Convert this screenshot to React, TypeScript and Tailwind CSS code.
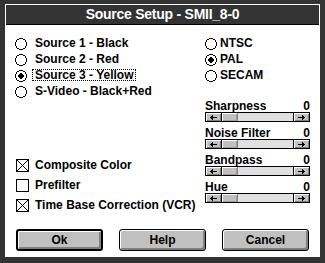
import React from "react";

function RadioCircle({ checked }: { checked?: boolean }) {
  return (
    <svg width="12" height="12" viewBox="0 0 12 12" className="shrink-0 mt-[3px]" shapeRendering="crispEdges">
      <circle cx="6" cy="6" r="5.5" fill="#fff" stroke="#000" strokeWidth="1" />
      {checked && <circle cx="6" cy="6" r="2.6" fill="#000" />}
    </svg>
  );
}

function Radio({ label, checked, focused, right }: { label: string; checked?: boolean; focused?: boolean; right?: boolean }) {
  return (
    <div className="h-[16px] flex items-start">
      <RadioCircle checked={checked} />
      <span
        className={
          (right ? "ml-0 " : "ml-[5px] ") +
          (focused ? "border-dotted border-black " : "border-transparent ") +
          "mt-[2px] h-[12px] leading-[10px] px-[2px] border text-[12px] font-bold whitespace-nowrap"
        }
      >
        {label}
      </span>
    </div>
  );
}

function Check({ label, checked }: { label: string; checked?: boolean }) {
  return (
    <div className="h-[20px] flex items-center">
      <span className="ml-[1px] w-[13px] h-[13px] border border-black bg-white shrink-0 flex">
        {checked && (
          <svg width="11" height="11" viewBox="0 0 11 11" shapeRendering="crispEdges">
            <line x1="0" y1="0" x2="11" y2="11" stroke="#000" strokeWidth="1" />
            <line x1="11" y1="0" x2="0" y2="11" stroke="#000" strokeWidth="1" />
          </svg>
        )}
      </span>
      <span className="ml-[6px] text-[12px] font-bold whitespace-nowrap">{label}</span>
    </div>
  );
}

function Arrow({ dir }: { dir: "l" | "r" }) {
  return (
    <svg width="7" height="5" viewBox="0 0 7 5" shapeRendering="crispEdges" style={{ transform: dir === "r" ? "scaleX(-1)" : undefined }}>
      <polygon points="0,2.5 3,0 3,5" fill="#000" />
      <rect x="3" y="2" width="4" height="1" fill="#000" />
    </svg>
  );
}

function Slider({ label }: { label: string }) {
  return (
    <div className="flex flex-col">
      <div className="h-[11px] leading-[11px] flex justify-between text-[12px] font-bold">
        <span>{label}</span>
        <span>0</span>
      </div>
      <div className="h-[10px] border border-black flex bg-[#e0e0e0]">
        <div className="w-[16px] h-full bg-[#c0c0c0] border-r border-black flex items-center justify-center shadow-[inset_1px_1px_0_#fff,inset_-1px_-1px_0_#808080]">
          <Arrow dir="l" />
        </div>
        <div className="w-[16px] h-full bg-[#c0c0c0] border-r border-[#808080] shadow-[inset_1px_1px_0_#fff,inset_-1px_-1px_0_#a0a0a0]" />
        <div className="flex-1" />
        <div className="w-[16px] h-full bg-[#c0c0c0] border-l border-black flex items-center justify-center shadow-[inset_1px_1px_0_#fff,inset_-1px_-1px_0_#808080]">
          <Arrow dir="r" />
        </div>
      </div>
    </div>
  );
}

function Button({ label, def }: { label: string; def?: boolean }) {
  return (
    <div
      className={
        (def ? "border-2 " : "border ") +
        "w-[87px] h-[22px] rounded-[3px] border-black bg-[#c0c0c0] flex items-center justify-center text-[12px] font-bold shadow-[inset_1px_1px_0_#fff,inset_-2px_-2px_0_#808080]"
      }
    >
      {label}
    </div>
  );
}

export default function App() {
  return (
    <div className="w-[325px] h-[263px] bg-[#333333] pt-[4px] px-[5px] pb-[6px] font-['Liberation_Sans',Arial,sans-serif] text-black">
      <div className="h-full bg-white flex flex-col">
        <div className="mx-[1px] mt-[1px] h-[20px] bg-[#333333] border-b border-black flex items-center justify-center text-white font-bold text-[14px] tracking-[-0.25px]">
          Source Setup - SMII_8-0
        </div>
        <div className="flex mt-[10px]">
          <div className="w-[200px] pl-[10px] flex flex-col">
            <Radio label="Source 1 - Black" />
            <Radio label="Source 2 - Red" />
            <Radio label="Source 3 - Yellow" checked focused />
            <Radio label="S-Video - Black+Red" />
            <div className="mt-[56px] flex flex-col">
              <Check label="Composite Color" checked />
              <Check label="Prefilter" />
              <Check label="Time Base Correction (VCR)" checked />
            </div>
          </div>
          <div className="w-[105px] flex flex-col">
            <Radio label="NTSC" right />
            <Radio label="PAL" checked right />
            <Radio label="SECAM" right />
            <div className="mt-[18px] flex flex-col gap-[6px]">
              <Slider label="Sharpness" />
              <Slider label="Noise Filter" />
              <Slider label="Bandpass" />
              <Slider label="Hue" />
            </div>
          </div>
        </div>
        <div className="mt-auto mb-[6px] pl-[11px] flex gap-[16px]">
          <Button label="Ok" def />
          <Button label="Help" />
          <Button label="Cancel" />
        </div>
      </div>
    </div>
  );
}
